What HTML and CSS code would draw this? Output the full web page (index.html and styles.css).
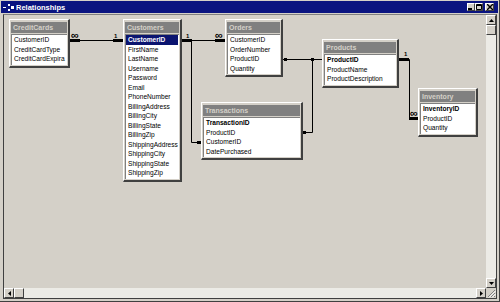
FILE: index.html
```html
<!DOCTYPE html>
<html lang="en">
<head>
  <meta charset="UTF-8">
  <title>Relationships</title>
  <link rel="stylesheet" href="styles.css">
</head>
<body>

  <div class="window">
    <div class="titlebar">
      <svg class="app-icon" width="11" height="9" viewBox="0 0 11 9">
        <rect x="0" y="4" width="3" height="1" fill="#fff"/>
        <rect x="5" y="1" width="2" height="2" fill="#fff"/>
        <rect x="5" y="6" width="2" height="2" fill="#fff"/>
        <rect x="8" y="3" width="3" height="3" fill="#fff"/>
      </svg>
      <span class="title">Relationships</span>
      <div class="caption">
        <span class="cap-btn">
          <svg width="6" height="6" viewBox="0 0 6 6"><rect x="0" y="4" width="4" height="2" fill="#000"/></svg>
        </span>
        <span class="cap-btn">
          <svg width="6" height="6" viewBox="0 0 6 6"><path d="M0.5 0.5H5.5V5.5H0.5Z M0.5 1.5H5.5" fill="none" stroke="#000"/></svg>
        </span>
        <span class="cap-btn close">
          <svg width="6" height="6" viewBox="0 0 6 6"><path d="M0 0L6 6M6 0L0 6" stroke="#000" stroke-width="1.4"/></svg>
        </span>
      </div>
    </div>

    <div class="client">
      <div class="canvas">
        <svg class="links" width="482" height="273" viewBox="4 15 482 273">
          <path d="M70 40.5H123 M182 40.5H225 M191.5 40.5V142.5H201 M283 59.5H322 M312.5 59.5V132.5H303 M399 59.5H409.5V118.5H418" fill="none" stroke="#000"/>
          <g fill="#000">
            <rect x="70" y="39" width="10" height="3"/>
            <rect x="113" y="39" width="10" height="3"/>
            <rect x="182" y="39" width="10" height="3"/>
            <rect x="215" y="39" width="10" height="3"/>
            <rect x="197" y="141" width="4" height="3"/>
            <rect x="284" y="58" width="3" height="3"/>
            <rect x="311" y="58" width="3" height="3"/>
            <rect x="303" y="131" width="3" height="3"/>
            <rect x="399" y="58" width="10" height="3"/>
            <rect x="409" y="117" width="9" height="3"/>
          </g>
          <text class="many" x="71" y="39">∞</text>
          <text class="one" x="114" y="38">1</text>
          <text class="one" x="186" y="38">1</text>
          <text class="many" x="215" y="39">∞</text>
          <text class="one" x="404" y="56">1</text>
          <text class="many" x="410" y="117">∞</text>
        </svg>

        <div class="tbl t-credit">
          <div class="tbl-head">CreditCards</div>
          <div class="tbl-list">
            <div class="row">CustomerID</div>
            <div class="row">CreditCardType</div>
            <div class="row">CreditCardExpira</div>
          </div>
        </div>

        <div class="tbl t-customers">
          <div class="tbl-head">Customers</div>
          <div class="tbl-list">
            <div class="row key sel">CustomerID</div>
            <div class="row">FirstName</div>
            <div class="row">LastName</div>
            <div class="row">Username</div>
            <div class="row">Password</div>
            <div class="row">Email</div>
            <div class="row">PhoneNumber</div>
            <div class="row">BillingAddress</div>
            <div class="row">BillingCity</div>
            <div class="row">BillingState</div>
            <div class="row">BillingZip</div>
            <div class="row">ShippingAddress</div>
            <div class="row">ShippingCity</div>
            <div class="row">ShippingState</div>
            <div class="row">ShippingZip</div>
          </div>
        </div>

        <div class="tbl t-orders">
          <div class="tbl-head">Orders</div>
          <div class="tbl-list">
            <div class="row">CustomerID</div>
            <div class="row">OrderNumber</div>
            <div class="row">ProductID</div>
            <div class="row">Quantity</div>
          </div>
        </div>

        <div class="tbl t-transactions">
          <div class="tbl-head">Transactions</div>
          <div class="tbl-list">
            <div class="row key">TransactionID</div>
            <div class="row">ProductID</div>
            <div class="row">CustomerID</div>
            <div class="row">DatePurchased</div>
          </div>
        </div>

        <div class="tbl t-products">
          <div class="tbl-head">Products</div>
          <div class="tbl-list">
            <div class="row key">ProductID</div>
            <div class="row">ProductName</div>
            <div class="row">ProductDescription</div>
          </div>
        </div>

        <div class="tbl t-inventory">
          <div class="tbl-head">Inventory</div>
          <div class="tbl-list">
            <div class="row key">InventoryID</div>
            <div class="row">ProductID</div>
            <div class="row">Quantity</div>
          </div>
        </div>
      </div>

      <div class="vscroll">
        <span class="sb-btn"><svg width="5" height="3" viewBox="0 0 5 3"><path d="M2.5 0L5 3H0Z" fill="#000"/></svg></span>
        <span class="sb-thumb"></span>
        <span class="sb-track"></span>
        <span class="sb-btn"><svg width="5" height="3" viewBox="0 0 5 3"><path d="M0 0H5L2.5 3Z" fill="#000"/></svg></span>
      </div>

      <div class="hscroll">
        <span class="sb-btn"><svg width="3" height="5" viewBox="0 0 3 5"><path d="M3 0V5L0 2.5Z" fill="#000"/></svg></span>
        <span class="sb-thumb"></span>
        <span class="sb-track"></span>
        <span class="sb-btn"><svg width="3" height="5" viewBox="0 0 3 5"><path d="M0 0L3 2.5L0 5Z" fill="#000"/></svg></span>
      </div>

      <div class="grip">
        <svg width="10" height="10" viewBox="0 0 10 10">
          <path d="M9 2L2 9M9 5L5 9M9 8L8 9" stroke="#808080"/>
          <path d="M9.5 3L3 9.5M9.5 6L6 9.5" stroke="#fff"/>
        </svg>
      </div>
    </div>
  </div>

</body>
</html>
```

FILE: styles.css
```css
body {
  margin: 0;
  font-family: "Liberation Sans", Arial, sans-serif;
  background-color: #d4d0c8;
}

.window {
  width: 500px;
  height: 302px;
  box-sizing: border-box;
  padding: 1px 2px 2px 3px;
  display: flex;
  flex-direction: column;
  background-color: #d4d0c8;
  border-right: 1px solid #404040;
  border-bottom: 1px solid #404040;
}

/* title bar */
.titlebar {
  height: 12px;
  margin: 0 -1px 0 -2px;
  padding: 0 4px 0 2px;
  display: flex;
  align-items: center;
  background-color: #0a1480;
  color: #fff;
}

.app-icon {
  display: block;
}

.title {
  margin-left: 2px;
  font-size: 7.5px;
  font-weight: bold;
}

.caption {
  margin-left: auto;
  display: flex;
}

.cap-btn {
  width: 8px;
  height: 8px;
  box-sizing: border-box;
  display: flex;
  align-items: center;
  justify-content: center;
  background-color: #d4d0c8;
  border: 1px solid;
  border-color: #fff #404040 #404040 #fff;
}

.cap-btn.close {
  width: 9px;
  margin-left: 2px;
}

/* client area */
.client {
  flex: 1;
  min-height: 0;
  margin-top: 1px;
  display: grid;
  grid-template-columns: 1fr 10px;
  grid-template-rows: 1fr 10px;
  border: 1px solid;
  border-color: #808080 #404040 #404040 #404040;
}

.canvas {
  position: relative;
  overflow: hidden;
  background-color: #d4d0c8;
}

.links {
  position: absolute;
  left: 0;
  top: 0;
}

.many {
  font: bold 11px "Liberation Sans", Arial, sans-serif;
}

.one {
  font: bold 6px "Liberation Sans", Arial, sans-serif;
}

/* field list windows */
.tbl {
  position: absolute;
  box-sizing: border-box;
  padding: 2px 1px 1px 1px;
  background-color: #d4d0c8;
  border-top: 1px solid #fff;
  border-left: 1px solid #fff;
  border-right: 2px solid #404040;
  border-bottom: 2px solid #404040;
}

.tbl-head {
  height: 11px;
  line-height: 11px;
  padding-left: 2px;
  background-color: #808080;
  color: #d4d0c8;
  font-size: 7px;
  font-weight: bold;
  white-space: nowrap;
  overflow: hidden;
}

.tbl-list {
  margin-top: 1px;
  padding-bottom: 1px;
  background-color: #fff;
  border-top: 1px solid #808080;
  border-left: 1px solid #808080;
  overflow: hidden;
}

.row {
  height: 9.5px;
  line-height: 9.5px;
  padding-left: 2px;
  font-size: 6.6px;
  color: #000;
  white-space: nowrap;
}

.row.key {
  font-weight: bold;
}

.row.sel {
  margin-right: 1px;
  background-color: #0a1470;
  color: #fff;
}

.t-credit { left: 5px; top: 4px; width: 61px; }
.t-customers { left: 119px; top: 4px; width: 59px; }
.t-orders { left: 221px; top: 4px; width: 58px; }
.t-transactions { left: 197px; top: 87px; width: 102px; }
.t-products { left: 318px; top: 24px; width: 77px; }
.t-inventory { left: 414px; top: 73px; width: 60px; }

/* scroll bars */
.vscroll, .hscroll {
  display: flex;
  background-color: #ecebe6;
}

.vscroll {
  flex-direction: column;
}

.sb-btn, .sb-thumb {
  flex: 0 0 10px;
  width: 10px;
  height: 10px;
  box-sizing: border-box;
  display: flex;
  align-items: center;
  justify-content: center;
  background-color: #d4d0c8;
  border: 1px solid;
  border-color: #fff #404040 #404040 #fff;
}

.sb-track {
  flex: 1;
}

.grip {
  background-color: #d4d0c8;
}

.grip svg {
  display: block;
}
```
